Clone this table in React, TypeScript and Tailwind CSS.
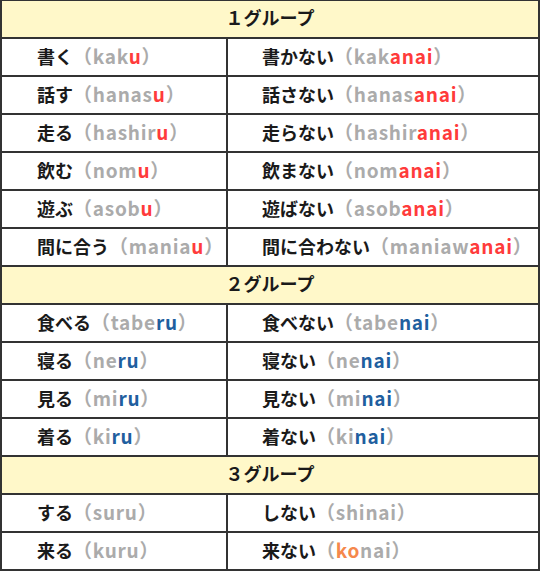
import React from "react";

type Cell = { jp: string; base: string; hl: string; tail?: string; color: string };

const RED = "text-[#ff3b3b]";
const BLUE = "text-[#1f5f9f]";
const ORANGE = "text-[#f5884c]";

const groups: { title: string; rows: [Cell, Cell][] }[] = [
    {
        title: "１グループ",
        rows: [
            [{ jp: "書く", base: "kak", hl: "u", color: RED }, { jp: "書かない", base: "kak", hl: "anai", color: RED }],
            [{ jp: "話す", base: "hanas", hl: "u", color: RED }, { jp: "話さない", base: "hanas", hl: "anai", color: RED }],
            [{ jp: "走る", base: "hashir", hl: "u", color: RED }, { jp: "走らない", base: "hashir", hl: "anai", color: RED }],
            [{ jp: "飲む", base: "nom", hl: "u", color: RED }, { jp: "飲まない", base: "nom", hl: "anai", color: RED }],
            [{ jp: "遊ぶ", base: "asob", hl: "u", color: RED }, { jp: "遊ばない", base: "asob", hl: "anai", color: RED }],
            [{ jp: "間に合う", base: "mania", hl: "u", color: RED }, { jp: "間に合わない", base: "maniaw", hl: "anai", color: RED }],
        ],
    },
    {
        title: "２グループ",
        rows: [
            [{ jp: "食べる", base: "tabe", hl: "ru", color: BLUE }, { jp: "食べない", base: "tabe", hl: "nai", color: BLUE }],
            [{ jp: "寝る", base: "ne", hl: "ru", color: BLUE }, { jp: "寝ない", base: "ne", hl: "nai", color: BLUE }],
            [{ jp: "見る", base: "mi", hl: "ru", color: BLUE }, { jp: "見ない", base: "mi", hl: "nai", color: BLUE }],
            [{ jp: "着る", base: "ki", hl: "ru", color: BLUE }, { jp: "着ない", base: "ki", hl: "nai", color: BLUE }],
        ],
    },
    {
        title: "３グループ",
        rows: [
            [{ jp: "する", base: "suru", hl: "", color: RED }, { jp: "しない", base: "shinai", hl: "", color: RED }],
            [{ jp: "来る", base: "kuru", hl: "", color: RED }, { jp: "来ない", base: "", hl: "ko", tail: "nai", color: ORANGE }],
        ],
    },
];

function Verb({ c }: { c: Cell }) {
    return (
        <span className="whitespace-nowrap">
            <span className="text-[#1a1a1a]">{c.jp}</span>
            <span className="text-[#ababab] text-[19px] tracking-[0.04em]">
                （{c.base}
                <span className={c.color}>{c.hl}</span>
                {c.tail}）
            </span>
        </span>
    );
}

export default function App() {
    return (
        <div
            className="w-[540px] h-[572px] bg-white"
            style={{ fontFamily: '"Noto Sans CJK JP", "Noto Sans", sans-serif' }}
        >
            <div className="flex flex-col border-x-2 border-b-2 border-t border-[#333] text-[18px] leading-none font-bold">
                {groups.map((g, gi) => (
                    <React.Fragment key={g.title}>
                        <div
                            className={`flex items-center justify-center pb-[4px] bg-[#fff8c9] text-[#1a1a1a] ${gi > 0 ? "h-[38px] border-t-2 border-[#333]" : "h-[36px]"}`}
                        >
                            {g.title}
                        </div>
                        {g.rows.map(([a, b], ri) => (
                            <div key={ri} className="h-[38px] flex border-t-2 border-[#333]">
                                <div className="w-[226px] flex items-center pl-[35px] pb-[4px] border-r-2 border-[#333]">
                                    <Verb c={a} />
                                </div>
                                <div className="flex-1 flex items-center pl-[34px] pb-[4px]">
                                    <Verb c={b} />
                                </div>
                            </div>
                        ))}
                    </React.Fragment>
                ))}
            </div>
        </div>
    );
}
